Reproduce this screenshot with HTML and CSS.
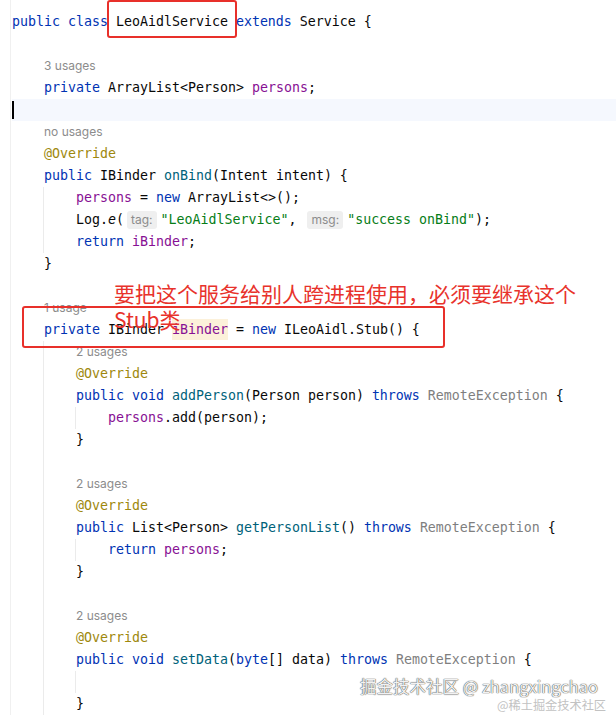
FILE: index.html
```html
<!DOCTYPE html>
<html>
<head>
<meta charset="utf-8">
<link rel="stylesheet" href="styles.css">
</head>
<body>
<div class="page">
  <div class="editor">
    <div class="ln"><span class="k">public class</span> LeoAidlService <span class="k">extends</span> Service {</div>
    <div class="indent noguide">
      <div class="ln"></div>
      <div class="usage">3 usages</div>
      <div class="ln"><span class="k">private</span> ArrayList&lt;Person&gt; <span class="f">persons</span>;</div>
      <div class="ln current"><span class="cursor"></span></div>
      <div class="usage">no usages</div>
      <div class="ln"><span class="a">@Override</span></div>
      <div class="ln"><span class="k">public</span> IBinder <span class="m">onBind</span>(Intent intent) {</div>
      <div class="indent">
        <div class="ln"><span class="f">persons</span> = <span class="k">new</span> ArrayList&lt;&gt;();</div>
        <div class="ln">Log.<i>e</i>(<span class="hint">tag:</span><span class="s">"LeoAidlService"</span>, <span class="hint">msg:</span><span class="s">"success onBind"</span>);</div>
        <div class="ln"><span class="k">return</span> <span class="f">iBinder</span>;</div>
      </div>
      <div class="ln">}</div>
      <div class="ln"></div>
      <div class="usage">1 usage</div>
      <div class="ln"><span class="k">private</span> IBinder <span class="f hl">iBinder</span> = <span class="k">new</span> ILeoAidl.Stub() {</div>
      <div class="indent">
        <div class="usage">2 usages</div>
        <div class="ln"><span class="a">@Override</span></div>
        <div class="ln"><span class="k">public void</span> <span class="m">addPerson</span>(Person person) <span class="k">throws</span> <span class="g">RemoteException</span> {</div>
        <div class="indent">
          <div class="ln"><span class="f">persons</span>.add(person);</div>
        </div>
        <div class="ln">}</div>
        <div class="ln"></div>
        <div class="usage">2 usages</div>
        <div class="ln"><span class="a">@Override</span></div>
        <div class="ln"><span class="k">public</span> List&lt;Person&gt; <span class="m">getPersonList</span>() <span class="k">throws</span> <span class="g">RemoteException</span> {</div>
        <div class="indent">
          <div class="ln"><span class="k">return</span> <span class="f">persons</span>;</div>
        </div>
        <div class="ln">}</div>
        <div class="ln"></div>
        <div class="usage">2 usages</div>
        <div class="ln"><span class="a">@Override</span></div>
        <div class="ln"><span class="k">public void</span> <span class="m">setData</span>(<span class="k">byte</span>[] data) <span class="k">throws</span> <span class="g">RemoteException</span> {</div>
        <div class="indent">
          <div class="ln"></div>
        </div>
        <div class="ln">}</div>
      </div>
    </div>
  </div>

  <div class="redbox box1"></div>
  <div class="redbox box2"></div>
  <div class="note">要把这个服务给别人跨进程使用，必须要继承这个<br>Stub类</div>

  <div class="wm">掘金技术社区 @ zhangxingchao</div>
  <div class="wm2">@稀土掘金技术社区</div>
</div>
</body>
</html>
```

FILE: styles.css
```css
html, body {
  margin: 0;
  padding: 0;
  background: #ffffff;
}

.page {
  position: relative;
  width: 616px;
  height: 716px;
  overflow: hidden;
  background: #ffffff;
}

.editor {
  margin-left: 10px;
  padding-top: 11px;
  padding-left: 1px;
  border-left: 1px solid #f0f0f0;
  font-family: "DejaVu Sans Mono", "Liberation Mono", monospace;
  font-size: 13.29px;
  color: #080808;
}

.ln {
  height: 22px;
  line-height: 22px;
  white-space: pre;
}

.indent {
  margin-left: -1px;
  padding-left: 32px;
  border-left: 1px solid #ebebeb;
}

.indent.noguide {
  margin-left: 0;
  padding-left: 32px;
  border-left: 0;
}

.current {
  margin-left: -32px;
  background: #f5f8fe;
  display: flex;
  align-items: center;
}

.cursor {
  display: inline-block;
  width: 2px;
  height: 18px;
  background: #000000;
}

.usage {
  height: 22px;
  line-height: 22px;
  font-family: "Inter", "Noto Sans", sans-serif;
  font-size: 12px;
  color: #8c8c8c;
}

.k { color: #0033b3; }
.f { color: #871094; }
.m { color: #00627a; }
.a { color: #9e880d; }
.s { color: #067d17; }
.g { color: #7f7f7f; }

.hl {
  background: #fcf1da;
  padding: 3px 0;
}

.hint {
  display: inline-block;
  font-family: "Inter", "Noto Sans", sans-serif;
  font-size: 12px;
  color: #8c8c8c;
  background: #efefef;
  border-radius: 3px;
  padding: 0 4px;
  line-height: 18px;
  margin: 0 4px 0 3px;
}

.redbox {
  position: absolute;
  border: 2.5px solid #e8302a;
  border-radius: 3px;
  box-sizing: border-box;
}

.box1 {
  left: 107px;
  top: 0px;
  width: 130px;
  height: 38px;
}

.box2 {
  left: 22px;
  top: 306px;
  width: 423px;
  height: 42px;
}

.note {
  position: absolute;
  left: 114px;
  top: 280px;
  font-family: "Noto Sans CJK SC", "Noto Sans", sans-serif;
  font-size: 21px;
  line-height: 26px;
  color: #e8322b;
  white-space: nowrap;
}

.wm {
  position: absolute;
  left: 360px;
  top: 675px;
  font-family: "Noto Sans CJK SC", "Noto Sans", sans-serif;
  font-size: 16.5px;
  line-height: 22px;
  color: #f2f2f2;
  text-shadow: 0 0 1px #444, 0 0 1px #444;
  white-space: nowrap;
}

.wm2 {
  position: absolute;
  left: 497px;
  top: 697px;
  font-family: "Noto Sans CJK SC", "Noto Sans", sans-serif;
  font-size: 12.2px;
  line-height: 16px;
  color: #c2c2c2;
  white-space: nowrap;
}
```
